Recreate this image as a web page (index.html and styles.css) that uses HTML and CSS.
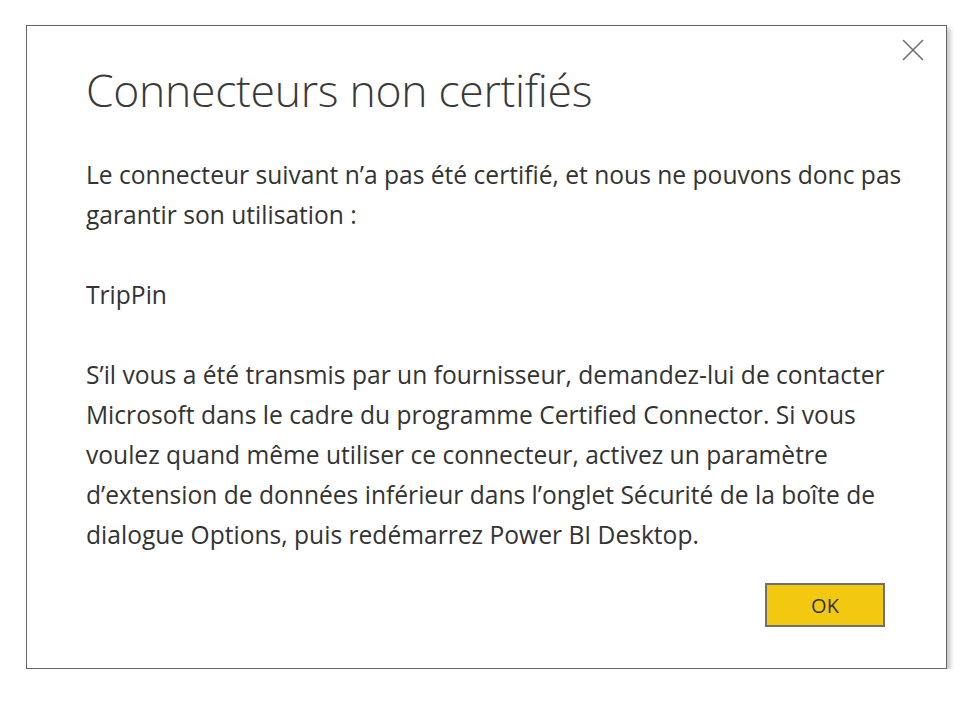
FILE: index.html
```html
<!DOCTYPE html>
<html lang="fr">
<head>
<meta charset="utf-8">
<title>Connecteurs non certifiés</title>
<link rel="stylesheet" href="styles.css">
</head>
<body>
<div class="dialog">
  <button class="close" aria-label="Fermer">
    <svg width="22" height="22" viewBox="0 0 22 22"><path d="M1 1 L21 21 M21 1 L1 21" stroke="#707070" stroke-width="1.6" fill="none"/></svg>
  </button>
  <h1 class="title">Connecteurs non certifiés</h1>
  <div class="content">
    <p>Le connecteur suivant n’a pas été certifié, et nous ne pouvons donc pas garantir son utilisation :</p>
    <p>TripPin</p>
    <p>S’il vous a été transmis par un fournisseur, demandez-lui de contacter Microsoft dans le cadre du programme Certified Connector. Si vous voulez quand même utiliser ce connecteur, activez un paramètre d’extension de données inférieur dans l’onglet Sécurité de la boîte de dialogue Options, puis redémarrez Power BI Desktop.</p>
  </div>
  <div class="actions">
    <button class="ok">OK</button>
  </div>
</div>
</body>
</html>
```
FILE: styles.css
```css
html, body {
  margin: 0;
  padding: 0;
  background: #ffffff;
}
body {
  padding: 25px 0 0 26px;
  font-family: "Open Sans", "Noto Sans", sans-serif;
  color: #333333;
}
.dialog {
  position: relative;
  box-sizing: border-box;
  width: 921px;
  height: 644px;
  border: 1px solid #666666;
  background: #ffffff;
  box-shadow: 3px 3px 5px rgba(0, 0, 0, 0.25);
  padding: 0 30px 0 59px;
  display: flex;
  flex-direction: column;
}
.close {
  position: absolute;
  top: 13px;
  right: 22px;
  width: 22px;
  height: 22px;
  padding: 0;
  border: 0;
  background: transparent;
  cursor: pointer;
}
.close svg { display: block; }
.title {
  margin: 36px 0 0 0;
  font-weight: 300;
  font-size: 44.5px;
  line-height: 56px;
  color: #3a3a3a;
  letter-spacing: -0.3px;
}
.content {
  margin-top: 37px;
  font-size: 24.6px;
  line-height: 40px;
}
.content p {
  margin: 0 0 40px 0;
}
.content p:last-child { margin-bottom: 0; }
.actions {
  display: flex;
  justify-content: flex-end;
  margin-top: 28px;
  padding-right: 31px;
}
.ok {
  box-sizing: border-box;
  width: 120px;
  height: 44px;
  background: #f2c811;
  border: 2px solid #707070;
  font-family: "Open Sans", "Noto Sans", sans-serif;
  font-size: 20px;
  color: #333333;
  padding: 0;
  cursor: pointer;
}
```
